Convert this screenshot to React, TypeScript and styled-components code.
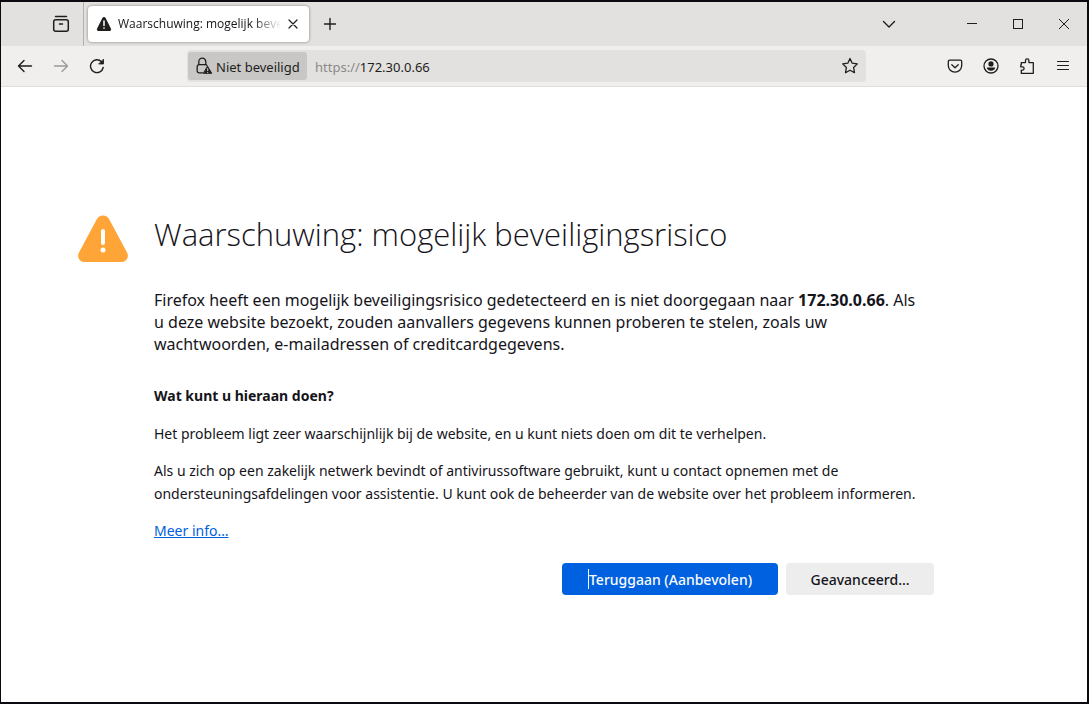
import React from "react";
import styled, { createGlobalStyle } from "styled-components";

const GlobalStyle = createGlobalStyle`
  * { box-sizing: border-box; }
  body {
    margin: 0;
    background: #ffffff;
    color: #15141a;
    font-family: "Noto Sans", "Open Sans", sans-serif;
  }
  button, input { font: inherit; color: inherit; }
`;

const Window = styled.div`
  min-height: 100vh;
  display: flex;
  flex-direction: column;
  border: 2px solid #0c0a10;
  border-left-width: 1px;
`;

const TabStrip = styled.header`
  display: flex;
  align-items: center;
  height: 44px;
  background: #e2e1df;
`;

const FirefoxView = styled.div`
  display: flex;
  align-items: center;
  justify-content: flex-end;
  width: 83px;
  height: 100%;
  padding-right: 10px;
  border-right: 1px solid #b3b2b0;
`;

const IconButton = styled.button<{ $width?: number; $faded?: boolean }>`
  display: flex;
  align-items: center;
  justify-content: center;
  flex: none;
  width: ${(p) => p.$width ?? 36}px;
  height: 32px;
  padding: 0;
  border: 0;
  border-radius: 4px;
  background: transparent;
  color: #1f1e1c;
  opacity: ${(p) => (p.$faded ? 0.4 : 1)};
`;

const Tab = styled.div`
  display: flex;
  align-items: center;
  width: 221px;
  height: 36px;
  margin-left: 4px;
  padding: 0 4px 0 8px;
  border-radius: 4px;
  background: #ffffff;
  box-shadow: 0 0 3px rgba(0, 0, 0, 0.45);
`;

const TabTitle = styled.span`
  flex: 1;
  min-width: 0;
  margin-left: 6px;
  overflow: hidden;
  white-space: nowrap;
  font-family: "Open Sans", "Noto Sans", sans-serif;
  font-size: 12px;
  line-height: 20px;
  mask-image: linear-gradient(to left, transparent, #000 28px);
`;

const WindowControls = styled.div`
  display: flex;
  margin-left: auto;
`;

const Toolbar = styled.nav`
  display: flex;
  align-items: center;
  height: 41px;
  padding: 0 6px;
  background: #f0efed;
  border-bottom: 1px solid #dededc;
`;

const AddressBar = styled.div`
  display: flex;
  align-items: center;
  flex: 1;
  height: 32px;
  margin: 0 71px 0 72px;
  padding: 0 0 0 1px;
  border-radius: 4px;
  background: #e2e1df;
  font-size: 13px;
`;

const SecurityBadge = styled.button`
  display: flex;
  align-items: center;
  gap: 3px;
  width: 119px;
  height: 28px;
  padding: 0 0 0 8px;
  border: 0;
  border-radius: 3px;
  background: #c8c7c5;
  color: #1f1e1c;
  white-space: nowrap;
`;

const BarText = styled.span`
  padding-top: 2px;
  line-height: 18px;
`;

const Address = styled(BarText)`
  flex: 1;
  margin-left: 8px;
  color: #1f1e1c;
`;

const Scheme = styled.span`
  color: #8b8a88;
`;

const ErrorPage = styled.main`
  flex: 1;
  display: flex;
  justify-content: center;
  padding: 120px 24px 48px;
`;

const ErrorLayout = styled.section`
  display: grid;
  grid-template-columns: 76px minmax(0, 780px) 76px;
  align-content: start;
`;

const WarningIcon = styled.svg`
  margin-top: 8px;
`;

const ErrorBody = styled.div`
  font-size: 14px;
  line-height: 23px;
`;

const Title = styled.h1`
  margin: 0 0 28px;
  font-family: "Open Sans", "Noto Sans", sans-serif;
  font-size: 31px;
  font-weight: 300;
  line-height: 54px;
`;

const Lead = styled.p`
  margin: 0 0 29px;
  font-size: 16px;
  line-height: 22px;
`;

const SubTitle = styled.h2`
  margin: 0 0 15px;
  font-size: 14px;
  font-weight: 700;
  line-height: 23px;
`;

const Paragraph = styled.p`
  margin: 0 0 14px;
`;

const MoreLink = styled.a`
  color: #0061e0;
  text-decoration: underline;
`;

const Actions = styled.div`
  display: flex;
  justify-content: flex-end;
  gap: 8px;
  margin-top: 21px;
`;

const ActionButton = styled.button<{ $primary?: boolean }>`
  width: ${(p) => (p.$primary ? 216 : 148)}px;
  height: 32px;
  padding: 0;
  display: flex;
  align-items: center;
  justify-content: center;
  border: 0;
  border-radius: 4px;
  background: ${(p) => (p.$primary ? "#0061e0" : "#ededee")};
  color: ${(p) => (p.$primary ? "#fbfbfe" : "#15141a")};
  font-weight: 500;
  white-space: nowrap;
`;

const Caret = styled.span`
  width: 1px;
  height: 20px;
  background: #ffffff;
`;

const stroke = {
  fill: "none",
  stroke: "currentColor",
  strokeLinecap: "round" as const,
  strokeLinejoin: "round" as const,
};

export default function App() {
  return (
    <Window>
      <GlobalStyle />
      <TabStrip>
        <FirefoxView>
          <IconButton $width={24} aria-label="Firefox View">
            <svg width="18" height="18" viewBox="0 0 18 18" {...stroke} strokeWidth="1.5">
              <path d="M3.5 1.5h11" />
              <rect x="1.7" y="4.7" width="14.6" height="11.6" rx="2" />
              <path d="M7.5 9h3" />
            </svg>
          </IconButton>
        </FirefoxView>
        <Tab>
          <svg width="16" height="16" viewBox="0 0 16 16">
            <path d="M8 1C7.3 1 6.700 1.400 6.400 2L1 12.700C.5 13.800 1.200 15 2.400 15h11.200c1.200 0 1.900-1.200 1.400-2.300L9.600 2C9.300 1.400 8.700 1 8 1Z" fill="#1f1e1c" />
            <path d="M8 5v4.500M8 12v.3" stroke="#fff" strokeWidth="1.500" strokeLinecap="round" />
          </svg>
          <TabTitle>Waarschuwing: mogelijk beveiligingsrisico</TabTitle>
          <IconButton $width={24} aria-label="Tabblad sluiten">
            <svg width="10" height="10" viewBox="0 0 10 10" {...stroke} strokeWidth="1.200">
              <path d="M1 1l8 8M9 1L1 9" />
            </svg>
          </IconButton>
        </Tab>
        <IconButton $width={42} aria-label="Nieuw tabblad">
          <svg width="14" height="14" viewBox="0 0 14 14" {...stroke} strokeWidth="1.400">
            <path d="M7 1.500v11M1.500 7h11" />
          </svg>
        </IconButton>
        <WindowControls>
          <IconButton $width={120} aria-label="Alle tabbladen tonen">
            <svg width="14" height="14" viewBox="0 0 14 14" {...stroke} strokeWidth="1.400">
              <path d="M1.500 4.500L7 10l5.500-5.500" />
            </svg>
          </IconButton>
          <IconButton $width={46} aria-label="Minimaliseren">
            <svg width="10" height="10" viewBox="0 0 10 10" {...stroke} shapeRendering="crispEdges">
              <path d="M0 4.500h10" />
            </svg>
          </IconButton>
          <IconButton $width={46} aria-label="Maximaliseren">
            <svg width="10" height="10" viewBox="0 0 10 10" {...stroke} shapeRendering="crispEdges">
              <path d="M.5.5h9v9h-9z" />
            </svg>
          </IconButton>
          <IconButton $width={46} aria-label="Sluiten">
            <svg width="10" height="10" viewBox="0 0 10 10" {...stroke} strokeWidth="1">
              <path d="M0 0l10 10M10 0L0 10" />
            </svg>
          </IconButton>
        </WindowControls>
      </TabStrip>

      <Toolbar>
        <IconButton aria-label="Terug">
          <svg width="16" height="16" viewBox="0 0 16 16" {...stroke} strokeWidth="1.400">
            <path d="M14.500 8h-13M7 2.500L1.500 8 7 13.500" />
          </svg>
        </IconButton>
        <IconButton $faded aria-label="Vooruit">
          <svg width="16" height="16" viewBox="0 0 16 16" {...stroke} strokeWidth="1.400">
            <path d="M1.500 8h13M9 2.500L14.500 8 9 13.500" />
          </svg>
        </IconButton>
        <IconButton aria-label="Vernieuwen">
          <svg width="16" height="16" viewBox="0 0 16 16" {...stroke} strokeWidth="1.400">
            <path d="M14.200 9.500A6.400 6.400 0 1 1 12.500 3.700" />
            <path d="M14.500 1.500v4.500h-4.500z" fill="currentColor" strokeWidth=".8" />
          </svg>
        </IconButton>
        <AddressBar>
          <SecurityBadge>
            <svg width="17" height="18" viewBox="0 0 17 18" {...stroke} strokeWidth="1.300">
              <path d="M6.500 15.800H3a1.800 1.800 0 0 1-1.800-1.800V9.500A1.800 1.800 0 0 1 3 7.700h6.500a1.800 1.800 0 0 1 1.500.8" />
              <path d="M2.800 7.500V4.700a3.500 3.500 0 0 1 7 0v2.800" />
              <path d="M11.700 9.500l4 6.800h-8z" fill="currentColor" strokeWidth="1" />
              <path d="M11.700 11.500v2M11.700 15.200v.2" stroke="#c8c7c5" strokeWidth="1.100" />
            </svg>
            <BarText>Niet beveiligd</BarText>
          </SecurityBadge>
          <Address>
            <Scheme>https://</Scheme>172.30.0.66
          </Address>
          <IconButton $width={32} aria-label="Bladwijzer maken">
            <svg width="18" height="18" viewBox="0 0 18 18" {...stroke} strokeWidth="1.300">
              <path d="M9 1.500l2.200 4.700 5.100.7-3.700 3.600.9 5.200L9 13.200l-4.500 2.500.9-5.200L1.700 6.900l5.100-.7z" />
            </svg>
          </IconButton>
        </AddressBar>
        <IconButton aria-label="Opslaan naar Pocket">
          <svg width="16" height="16" viewBox="0 0 16 16" {...stroke} strokeWidth="1.300">
            <path d="M2.700 2.200h10.600c.8 0 1.400.6 1.400 1.400V7.500a6.700 6.700 0 0 1-13.400 0V3.600c0-.8.6-1.400 1.400-1.400Z" />
            <path d="M4.800 6.700L8 9.700l3.200-3" />
          </svg>
        </IconButton>
        <IconButton aria-label="Account">
          <svg width="16" height="16" viewBox="0 0 16 16" {...stroke} strokeWidth="1.300">
            <circle cx="8" cy="8" r="7" />
            <circle cx="8" cy="5.900" r="2.600" fill="currentColor" stroke="none" />
            <path d="M3.800 9.500h8.400c0 2-1.800 3.200-4.200 3.200S3.800 11.500 3.800 9.500Z" fill="currentColor" stroke="none" />
          </svg>
        </IconButton>
        <IconButton aria-label="Extensies">
          <svg width="16" height="18" viewBox="0 0 16 18" {...stroke} strokeWidth="1.300">
            <path d="M2.300 7.800V5.600h4.200V3.500a1.700 1.700 0 0 1 3.400 0v2.100H14.300v10.700H2.300v-3.200h1.200a1.600 1.600 0 0 0 0-3.200H1.800V7.800z" />
          </svg>
        </IconButton>
        <IconButton aria-label="Menu openen">
          <svg width="14" height="14" viewBox="0 0 14 14" {...stroke} strokeWidth="1.200">
            <path d="M1.500 2.500h11M1.500 6.500h11M1.500 10.500h11" />
          </svg>
        </IconButton>
      </Toolbar>

      <ErrorPage>
        <ErrorLayout>
          <WarningIcon width="50" height="48" viewBox="0 0 50 48" aria-hidden="true">
            <path d="M25 .5c-2.600 0-5 1.400-6.200 3.700L1 37.500C-1.500 42 1.700 47 6.700 47h36.600c5 0 8.200-5 5.700-9.500L31.200 4.200C30 1.900 27.600.5 25 .5Z" fill="#ffa436" />
            <path d="M25 16v12" stroke="#fff" strokeWidth="4" strokeLinecap="round" />
            <circle cx="25" cy="35" r="2.500" fill="#fff" />
          </WarningIcon>
          <ErrorBody>
            <Title>Waarschuwing: mogelijk beveiligingsrisico</Title>
            <Lead>
              Firefox heeft een mogelijk beveiligingsrisico gedetecteerd en is niet doorgegaan naar{" "}
              <strong>172.30.0.66</strong>. Als
              <br />u deze website bezoekt, zouden aanvallers gegevens kunnen proberen te stelen,
              zoals uw
              <br />
              wachtwoorden, e-mailadressen of creditcardgegevens.
            </Lead>
            <SubTitle>Wat kunt u hieraan doen?</SubTitle>
            <Paragraph>
              Het probleem ligt zeer waarschijnlijk bij de website, en u kunt niets doen om dit te
              verhelpen.
            </Paragraph>
            <Paragraph>
              Als u zich op een zakelijk netwerk bevindt of antivirussoftware gebruikt, kunt u
              contact opnemen met de ondersteuningsafdelingen voor assistentie. U kunt ook de
              beheerder van de website over het probleem informeren.
            </Paragraph>
            <Paragraph>
              <MoreLink href="#info">Meer info…</MoreLink>
            </Paragraph>
            <Actions>
              <ActionButton $primary>
                <Caret />
                Teruggaan (Aanbevolen)
              </ActionButton>
              <ActionButton>Geavanceerd…</ActionButton>
            </Actions>
          </ErrorBody>
        </ErrorLayout>
      </ErrorPage>
    </Window>
  );
}
